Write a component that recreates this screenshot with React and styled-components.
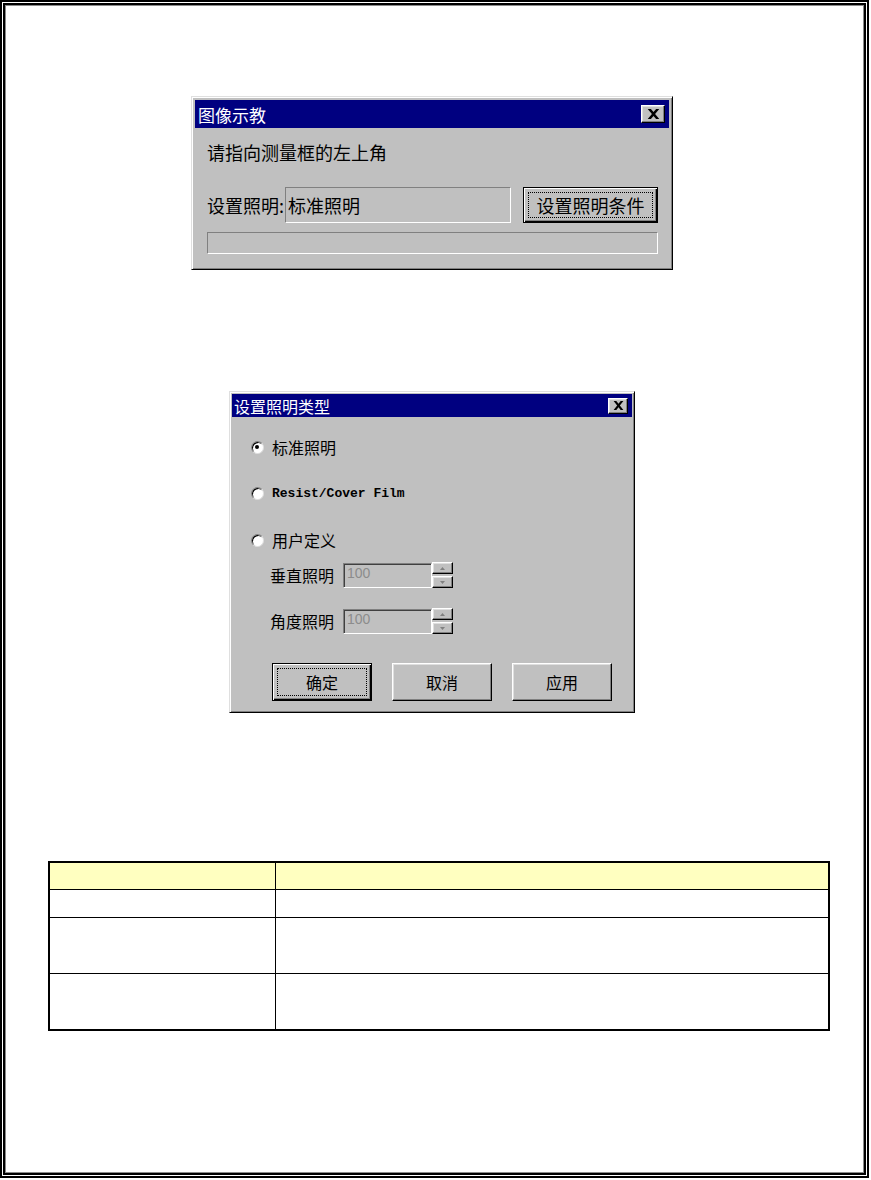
import React from 'react';
import styled, { createGlobalStyle, css } from 'styled-components';

const GlobalStyle = createGlobalStyle`
  body {
    margin: 0;
    background: #fff;
    font-family: "Noto Sans CJK SC", "Liberation Sans", sans-serif;
  }
`;

const raised = css`
  border: 1px solid;
  border-color: #fff #000 #000 #fff;
  box-shadow: inset -1px -1px #808080, inset 1px 1px #dfdfdf;
`;

const sunken = css`
  border: 1px solid;
  border-color: #808080 #fff #fff #808080;
`;

const Frame = styled.div`
  box-sizing: border-box;
  width: 869px;
  height: 1178px;
  border: 2px solid #000;
  padding: 1px;
  background: #fff;
`;

const FrameInner = styled.div`
  box-sizing: border-box;
  height: 100%;
  border: 2px solid #000;
  box-shadow: inset 0 0 0 1px #8a8a8a;
  padding: 1px;
  display: flex;
  flex-direction: column;
  align-items: flex-start;
`;

const Window = styled.div`
  box-sizing: border-box;
  width: ${p => p.$w}px;
  margin-left: ${p => p.$left}px;
  margin-top: ${p => p.$top}px;
  background: #c0c0c0;
  border: 1px solid;
  border-color: #dfdfdf #000 #000 #dfdfdf;
  box-shadow: inset 1px 1px #fff, inset -1px -1px #808080;
  padding: ${p => p.$pad}px;
  display: flex;
  flex-direction: column;
`;

const TitleBar = styled.div`
  height: ${p => p.$h}px;
  background: #000080;
  color: #fff;
  font-size: ${p => p.$size}px;
  line-height: 1;
  display: flex;
  align-items: center;
  justify-content: space-between;
  padding: 0 4px 0 ${p => p.$padLeft}px;
`;

const CloseBtn = styled.div`
  box-sizing: border-box;
  width: ${p => p.$w}px;
  height: ${p => p.$h}px;
  background: #c0c0c0;
  ${raised};
  display: flex;
  align-items: center;
  justify-content: center;
`;

const Body = styled.div`
  display: flex;
  flex-direction: column;
  align-items: flex-start;
  padding: ${p => p.$pad};
  color: #000;
`;

const Prompt = styled.div`
  font-size: 18px;
  line-height: 20px;
`;

const FieldRow = styled.div`
  display: flex;
  align-items: center;
  height: 36px;
  margin-top: 25px;
`;

const Label = styled.div`
  width: ${p => p.$w}px;
  font-size: ${p => p.$size}px;
  line-height: 20px;
  white-space: nowrap;
`;

const ReadBox = styled.div`
  box-sizing: border-box;
  width: 226px;
  height: 36px;
  ${sunken};
  padding-left: 2px;
  font-size: 18px;
  display: flex;
  align-items: center;
`;

const Button = styled.div`
  box-sizing: border-box;
  position: relative;
  width: ${p => p.$w}px;
  height: ${p => p.$h}px;
  margin-left: ${p => p.$ml || 0}px;
  background: #c0c0c0;
  font-size: ${p => p.$size}px;
  display: flex;
  align-items: center;
  justify-content: center;
  ${p => p.$default ? css`
    border: 1px solid #000;
    box-shadow: inset 1px 1px #fff, inset -1px -1px #000, inset -2px -2px #808080;
    &::after {
      content: '';
      position: absolute;
      inset: 4px;
      border: 1px dotted #000;
    }
  ` : raised};
`;

const Progress = styled.div`
  box-sizing: border-box;
  width: 451px;
  height: 22px;
  margin-top: 9px;
  ${sunken};
`;

const RadioRow = styled.div`
  display: flex;
  align-items: center;
  gap: 8px;
  height: 20px;
  margin-top: ${p => p.$mt}px;
  font-size: 16px;
`;

const Radio = styled.span`
  box-sizing: border-box;
  position: relative;
  width: 13px;
  height: 13px;
  border-radius: 50%;
  background: #fff;
  border: 1px solid;
  border-color: #808080 #dfdfdf #dfdfdf #808080;
  box-shadow: inset 1px 1px #000;
  ${p => p.$checked && css`
    &::after {
      content: '';
      position: absolute;
      left: 3px;
      top: 3px;
      width: 4px;
      height: 4px;
      border-radius: 50%;
      background: #000;
    }
  `}
`;

const MonoText = styled.span`
  font-family: "Liberation Mono", monospace;
  font-weight: bold;
  font-size: 13px;
`;

const SpinRow = styled.div`
  display: flex;
  align-items: center;
  height: 26px;
  margin-left: 19px;
  margin-top: ${p => p.$mt}px;
`;

const SpinInput = styled.div`
  box-sizing: border-box;
  width: 89px;
  height: 25px;
  margin-left: 9px;
  border: 1px solid;
  border-color: #808080 #fff #fff #808080;
  box-shadow: inset 1px 1px #404040;
  padding: 1px 0 0 3px;
  font-family: "Liberation Sans", sans-serif;
  font-size: 14px;
  line-height: 16px;
  color: #8c8c8c;
`;

const SpinCol = styled.div`
  display: flex;
  flex-direction: column;
  justify-content: space-between;
  height: 26px;
`;

const SpinBtn = styled.div`
  box-sizing: border-box;
  width: 21px;
  height: ${p => p.$h}px;
  background: #c0c0c0;
  ${raised};
  display: flex;
  align-items: center;
  justify-content: center;
`;

const ButtonRow = styled.div`
  display: flex;
  gap: 20px;
  margin-top: 29px;
  margin-left: 21px;
`;

const Table = styled.div`
  box-sizing: border-box;
  width: 782px;
  margin-top: 148px;
  margin-left: 42px;
  border: 2px solid #000;
  display: grid;
  grid-template-columns: 226px 1fr;
`;

const Cell = styled.div`
  box-sizing: border-box;
  height: ${p => p.$h}px;
  background: ${p => p.$head ? '#ffffc0' : '#fff'};
  border-bottom: ${p => p.$last ? 'none' : '1px solid #000'};
  border-right: ${p => p.$first ? '1px solid #000' : 'none'};
`;

function CloseIcon({ w, h }) {
  return (
    <svg width={w} height={h} viewBox="0 0 9 8" preserveAspectRatio="none">
      <path d="M0.5 0h2.2l1.8 2.4 1.8-2.4h2.2L5.6 4l2.9 4H6.3L4.5 5.6 2.7 8H0.5l2.9-4z" fill="#000" />
    </svg>
  );
}

function Arrow({ up }) {
  return (
    <svg width="5" height="3" viewBox="0 0 5 3">
      <path d={up ? 'M2.5 0L5 3H0z' : 'M0 0h5L2.5 3z'} fill="#808080" />
    </svg>
  );
}

function Spin({ label, mt }) {
  return (
    <SpinRow $mt={mt}>
      <Label $w={64} $size={16}>{label}</Label>
      <SpinInput>100</SpinInput>
      <SpinCol>
        <SpinBtn $h={12}><Arrow up /></SpinBtn>
        <SpinBtn $h={12}><Arrow /></SpinBtn>
      </SpinCol>
    </SpinRow>
  );
}

const rows = [
  { h: 27, head: true },
  { h: 28 },
  { h: 56 },
  { h: 55, last: true },
];

export default function App() {
  return (
    <>
      <GlobalStyle />
      <Frame>
        <FrameInner>
          <Window $w={482} $left={185} $top={90} $pad={3}>
            <TitleBar $h={28} $size={17} $padLeft={3}>
              <span>图像示教</span>
              <CloseBtn $w={24} $h={18}><CloseIcon w={13} h={10} /></CloseBtn>
            </TitleBar>
            <Body $pad="14px 11px 12px 12px">
              <Prompt>请指向测量框的左上角</Prompt>
              <FieldRow>
                <Label $w={78} $size={18}>设置照明:</Label>
                <ReadBox>标准照明</ReadBox>
                <Button $default $w={135} $h={36} $ml={12} $size={18}>设置照明条件</Button>
              </FieldRow>
              <Progress />
            </Body>
          </Window>

          <Window $w={406} $left={223} $top={121} $pad={2}>
            <TitleBar $h={23} $size={16} $padLeft={2}>
              <span>设置照明类型</span>
              <CloseBtn $w={20} $h={16}><CloseIcon w={11} h={9} /></CloseBtn>
            </TitleBar>
            <Body $pad="20px 19px 9px 19px">
              <RadioRow $mt={0}><Radio $checked />标准照明</RadioRow>
              <RadioRow $mt={26}><Radio /><MonoText>Resist/Cover Film</MonoText></RadioRow>
              <RadioRow $mt={27}><Radio />用户定义</RadioRow>
              <Spin label="垂直照明" mt={12} />
              <Spin label="角度照明" mt={20} />
              <ButtonRow>
                <Button $default $w={100} $h={38} $size={16}>确定</Button>
                <Button $w={100} $h={38} $size={16}>取消</Button>
                <Button $w={100} $h={38} $size={16}>应用</Button>
              </ButtonRow>
            </Body>
          </Window>

          <Table>
            {rows.map((r, i) => (
              <React.Fragment key={i}>
                <Cell $h={r.h} $head={r.head} $last={r.last} $first />
                <Cell $h={r.h} $head={r.head} $last={r.last} />
              </React.Fragment>
            ))}
          </Table>
        </FrameInner>
      </Frame>
    </>
  );
}
